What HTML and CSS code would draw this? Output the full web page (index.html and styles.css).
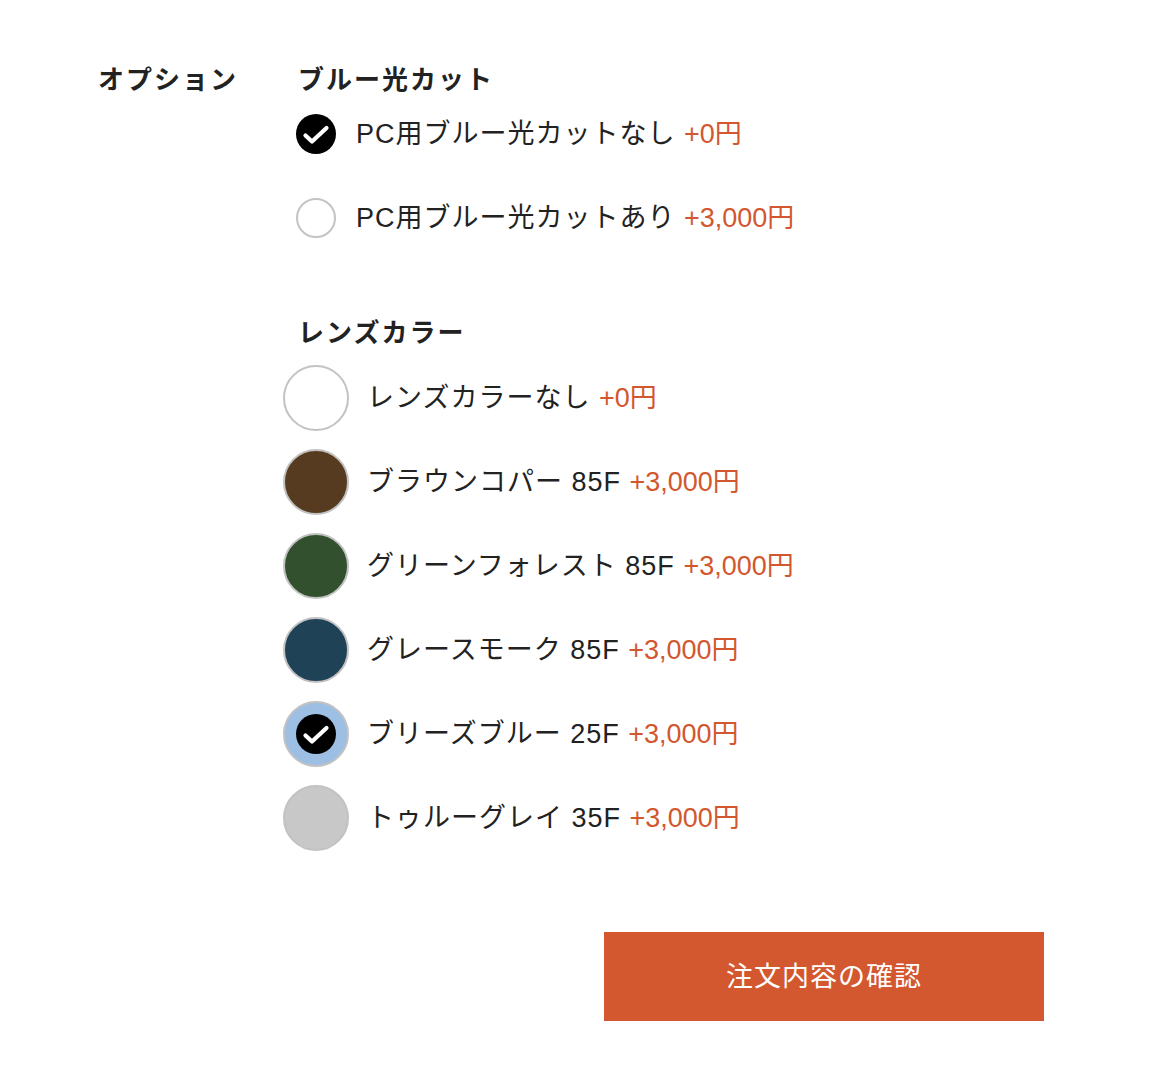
FILE: index.html
```html
<!DOCTYPE html>
<html lang="ja">
<head>
<meta charset="utf-8">
<link rel="stylesheet" href="styles.css">
</head>
<body>
<div class="page">
  <div class="option">
    <div class="label">オプション</div>
    <div class="content">
      <div class="group">
        <div class="heading">ブルー光カット</div>
        <div class="small-list">
          <div class="row small">
            <svg class="check" width="40" height="40" viewBox="0 0 40 40"><circle cx="20" cy="20" r="20" fill="#000"/><polyline points="9.5,21.5 16,27.5 30.5,14" fill="none" stroke="#fff" stroke-width="4.2" stroke-linecap="round" stroke-linejoin="round"/></svg>
            <span class="name">PC用ブルー光カットなし <span class="price">+0円</span></span>
          </div>
          <div class="row small">
            <span class="radio"></span>
            <span class="name">PC用ブルー光カットあり <span class="price">+3,000円</span></span>
          </div>
        </div>
      </div>
      <div class="group lens">
        <div class="heading">レンズカラー</div>
        <div class="lens-list">
          <div class="row big">
            <span class="swatch none"></span>
            <span class="name">レンズカラーなし <span class="price">+0円</span></span>
          </div>
          <div class="row big">
            <span class="swatch brown"></span>
            <span class="name">ブラウンコパー 85F <span class="price">+3,000円</span></span>
          </div>
          <div class="row big">
            <span class="swatch green"></span>
            <span class="name">グリーンフォレスト 85F <span class="price">+3,000円</span></span>
          </div>
          <div class="row big">
            <span class="swatch navy"></span>
            <span class="name">グレースモーク 85F <span class="price">+3,000円</span></span>
          </div>
          <div class="row big">
            <span class="swatch blue">
              <svg class="check" width="40" height="40" viewBox="0 0 40 40"><circle cx="20" cy="20" r="20" fill="#000"/><polyline points="9.5,21.5 16,27.5 30.5,14" fill="none" stroke="#fff" stroke-width="4.2" stroke-linecap="round" stroke-linejoin="round"/></svg>
            </span>
            <span class="name">ブリーズブルー 25F <span class="price">+3,000円</span></span>
          </div>
          <div class="row big">
            <span class="swatch gray"></span>
            <span class="name">トゥルーグレイ 35F <span class="price">+3,000円</span></span>
          </div>
        </div>
      </div>
    </div>
  </div>
  <div class="actions">
    <button class="confirm">注文内容の確認</button>
  </div>
</div>
</body>
</html>
```

FILE: styles.css
```css
html, body {
  margin: 0;
  padding: 0;
  background: #fff;
}
body {
  font-family: "Liberation Sans", "Noto Sans CJK JP", sans-serif;
  color: #222;
}
.page {
  width: 946px;
  padding: 62px 0 0 98px;
}
.option {
  display: flex;
}
.label {
  width: 200px;
  flex: none;
  font-size: 26px;
  font-weight: bold;
  line-height: 36px;
  letter-spacing: 2px;
  color: #222;
}
.content {
  display: flex;
  flex-direction: column;
}
.heading {
  font-size: 26px;
  font-weight: bold;
  line-height: 36px;
  letter-spacing: 2px;
  color: #222;
}
.small-list {
  display: flex;
  flex-direction: column;
  gap: 44px;
  margin-top: 16px;
}
.group.lens {
  margin-top: 77px;
}
.lens-list {
  display: flex;
  flex-direction: column;
  gap: 18px;
  margin-top: 14px;
}
.row {
  display: flex;
  align-items: center;
}
.row.small {
  height: 40px;
  margin-left: -2px;
  gap: 20px;
}
.row.big {
  height: 66px;
  margin-left: -15px;
  gap: 18px;
}
.name {
  font-size: 27px;
  line-height: 36px;
  letter-spacing: 1px;
  white-space: nowrap;
}
.price {
  color: #d2572f;
  letter-spacing: 0;
}
.check {
  display: block;
  flex: none;
}
.radio {
  width: 40px;
  height: 40px;
  box-sizing: border-box;
  border: 2px solid #c4c4c4;
  border-radius: 50%;
  flex: none;
}
.swatch {
  width: 66px;
  height: 66px;
  box-sizing: border-box;
  border: 2px solid #c2c2c2;
  border-radius: 50%;
  flex: none;
  display: flex;
  align-items: center;
  justify-content: center;
}
.swatch.none { background: #fff; }
.swatch.brown { background: #573b20; }
.swatch.green { background: #32502d; }
.swatch.navy { background: #1f4256; }
.swatch.blue { background: #9dbfe3; }
.swatch.gray { background: #c8c8c8; }
.actions {
  display: flex;
  justify-content: flex-end;
  margin-top: 81px;
}
.confirm {
  width: 440px;
  height: 89px;
  padding: 0 0 5px;
  border: none;
  background: #d3582f;
  color: #fff;
  font-family: "Noto Sans CJK JP", sans-serif;
  font-size: 27px;
  letter-spacing: 1px;
  cursor: pointer;
}
```
